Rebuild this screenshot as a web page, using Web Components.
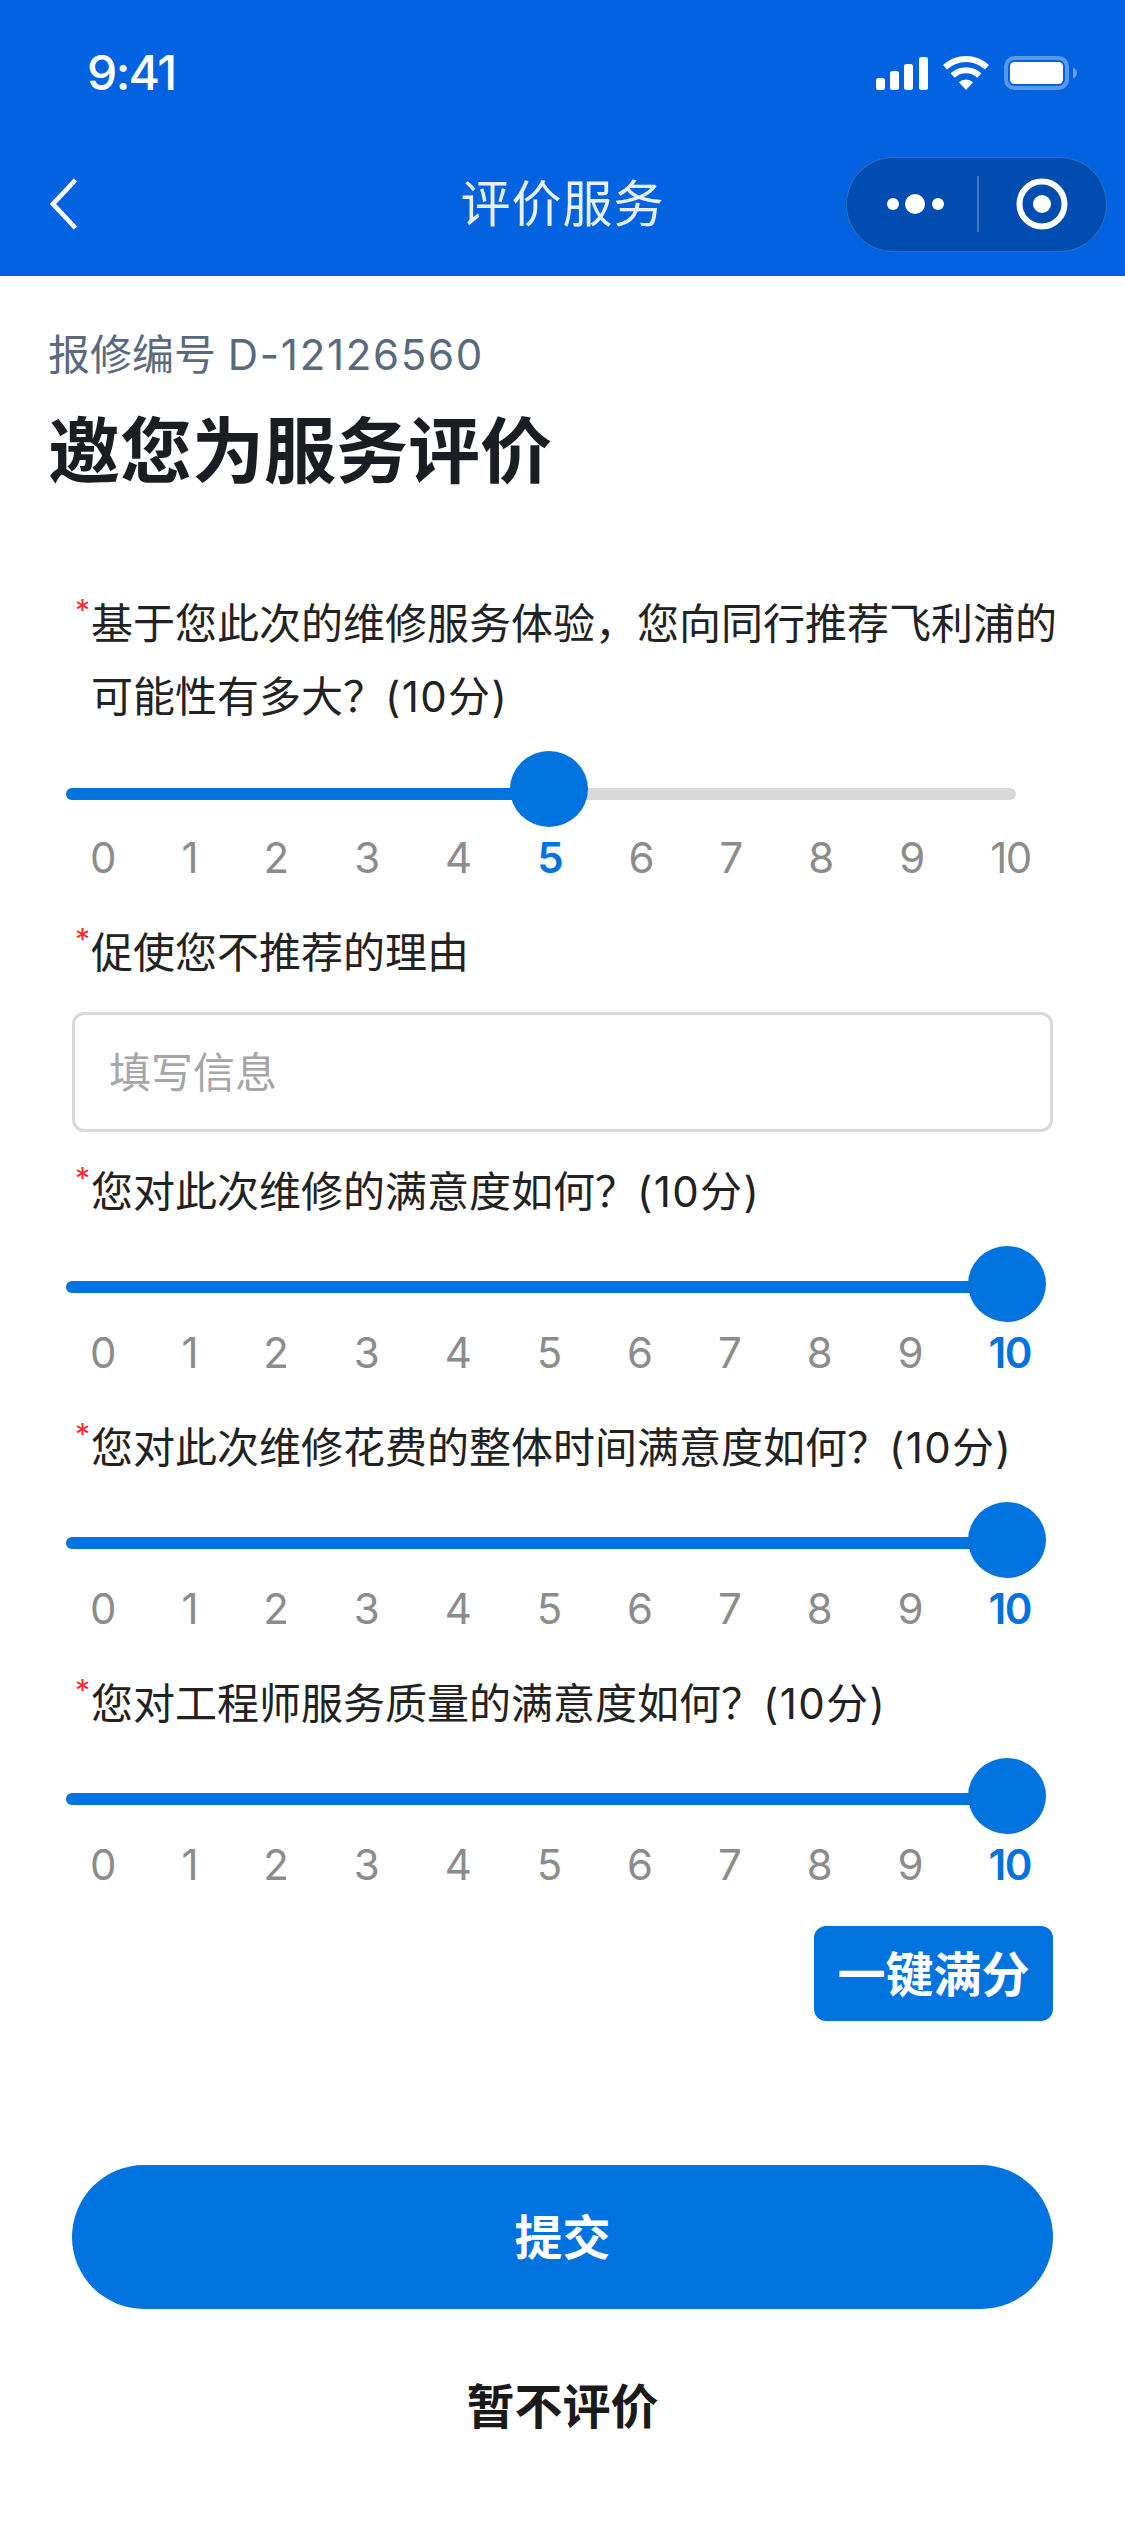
<!DOCTYPE html>
<html lang="zh-CN">
<head>
<meta charset="utf-8">
<title>评价服务</title>
<style>
  html, body { margin: 0; padding: 0; background: #fff; }
  body {
    width: 1125px;
    height: 2525px;
    overflow: hidden;
    font-family: Inter, "Noto Sans CJK SC", sans-serif;
    color: #222;
  }
</style>
</head>
<body>
  <review-page></review-page>

<script>
class StatusBar extends HTMLElement {
  constructor() {
    super();
    this.attachShadow({ mode: 'open' });
  }
  connectedCallback() {
    this.shadowRoot.innerHTML = `
      <style>
        :host { display: flex; align-items: center; justify-content: space-between; height: 132px; padding: 14px 48px 0 87px; box-sizing: border-box; color: #fff; }
        .time { font: 500 48px/58px Inter, sans-serif; letter-spacing: -1.6px; }
        .icons { display: flex; align-items: center; gap: 15px; }
        svg { display: block; }
      </style>
      <span class="time">9:41</span>
      <div class="icons">
        <svg width="52" height="34" viewBox="0 0 52 34" fill="#fff">
          <rect x="0" y="22" width="9" height="12" rx="2.5"/>
          <rect x="14" y="15" width="9" height="19" rx="2.5"/>
          <rect x="28" y="8" width="9" height="26" rx="2.5"/>
          <rect x="43" y="1" width="9" height="33" rx="2.5"/>
        </svg>
        <svg width="46" height="34" viewBox="0 0 46 34" fill="#fff">
          <path d="M0 9A34 34 0 0 1 46 9L41.96 13.4A28 28 0 0 0 4.04 13.4Z"/>
          <path d="M7.63 17.3A22.7 22.7 0 0 1 38.37 17.3L34.3 21.7A16.7 16.7 0 0 0 11.7 21.7Z"/>
          <path d="M15.9 26.3A10.5 10.5 0 0 1 30.1 26.3L23 34Z"/>
        </svg>
        <svg width="73" height="34" viewBox="0 0 73 34" fill="none">
          <rect x="2" y="2" width="61" height="30" rx="8.5" stroke="#fff" stroke-opacity=".35" stroke-width="4"/>
          <rect x="6" y="6" width="53" height="22" rx="4.5" fill="#fff"/>
          <path d="M69 11.5C71.5 12.5 73 14.5 73 17C73 19.5 71.5 21.5 69 22.5Z" fill="#fff" fill-opacity=".4"/>
        </svg>
      </div>
    `;
  }
}
customElements.define('status-bar', StatusBar);

class NavBar extends HTMLElement {
  constructor() {
    super();
    this.attachShadow({ mode: 'open' });
  }
  connectedCallback() {
    this.shadowRoot.innerHTML = `
      <style>
        :host { display: grid; grid-template-columns: 1fr auto 1fr; align-items: center; height: 144px; padding: 0 18px; box-sizing: border-box; }
        .title { font: 400 50px/60px Inter, "Noto Sans CJK SC", sans-serif; color: #e8f0fc; letter-spacing: 1px; }
        .back { display: block; margin-left: 32px; }
        .capsule {
          justify-self: end;
          display: flex;
          align-items: center;
          width: 261px;
          height: 95px;
          box-sizing: border-box;
          border: 1.5px solid rgba(255,255,255,.18);
          border-radius: 48px;
          background: #004cb0;
        }
        .more { width: 130px; box-sizing: border-box; padding-left: 8px; display: flex; justify-content: center; }
        .line { width: 1.5px; height: 56px; background: rgba(255,255,255,.25); }
        .close { flex: 1; display: flex; justify-content: center; }
        svg { display: block; }
      </style>
      <svg class="back" width="28" height="52" viewBox="0 0 28 52" fill="none">
        <path d="M25.5 2L3 26L25.5 50" stroke="#fff" stroke-width="4.6"/>
      </svg>
      <div class="title"><slot></slot></div>
      <div class="capsule">
        <div class="more">
          <svg width="58" height="20" viewBox="0 0 58 20" fill="#fff">
            <circle cx="6" cy="10" r="6"/><circle cx="28" cy="10" r="10"/><circle cx="51" cy="10" r="6"/>
          </svg>
        </div>
        <div class="line"></div>
        <div class="close">
          <svg width="52" height="52" viewBox="0 0 52 52" fill="none">
            <circle cx="26" cy="26" r="22.5" stroke="#fff" stroke-width="6"/>
            <circle cx="26" cy="26" r="9" fill="#fff"/>
          </svg>
        </div>
      </div>
    `;
  }
}
customElements.define('nav-bar', NavBar);

class QuestionLabel extends HTMLElement {
  constructor() {
    super();
    this.attachShadow({ mode: 'open' });
  }
  connectedCallback() {
    this.shadowRoot.innerHTML = `
      <style>
        :host { display: flex; font-size: 42px; line-height: 73px; color: #222; }
        .star { flex: none; width: 19px; color: #ff2a2a; font-size: 30px; line-height: 46px; padding-left: 3px; box-sizing: border-box; }
        .text { flex: 1; min-width: 0; margin-right: -8px; }
      </style>
      <span class="star">*</span>
      <div class="text"><slot></slot></div>
    `;
  }
}
customElements.define('question-label', QuestionLabel);

class RatingSlider extends HTMLElement {
  constructor() {
    super();
    this.attachShadow({ mode: 'open' });
  }
  connectedCallback() {
    const value = Number(this.getAttribute('value') || 0);
    const center = 20 + value * 91.45; // thumb centre from the block's left edge
    let ticks = '';
    for (let i = 0; i <= 10; i++) {
      ticks += `<span class="${i === value ? 'on' : ''}${i === 10 ? ' ten' : ''}">${i}</span>`;
    }
    this.shadowRoot.innerHTML = `
      <style>
        :host { display: block; }
        .rail { position: relative; height: 76px; margin: 18px 0 6px; }
        .track { position: absolute; left: -6px; width: 950px; top: calc(32px + var(--dip, 3px)); height: 12.5px; border-radius: 6px; background: #d8d8d8; overflow: hidden; }
        .fill { height: 100%; background: #0073df; }
        .thumb { position: absolute; top: 0; width: 78px; height: 76px; border-radius: 50%; background: #0073df; }
        .scale { display: flex; justify-content: space-between; padding: 0 22px 0 18px; font: 400 42px/50px Inter, sans-serif; color: #8c8c8c; }
        .on { color: #0073df; font-weight: 600; }
        .ten { letter-spacing: -1.5px; }
      </style>
      <slot></slot>
      <div class="rail">
        <div class="track"><div class="fill" style="width:${center + 6}px"></div></div>
        <div class="thumb" style="left:${center - 39}px"></div>
      </div>
      <div class="scale">${ticks}</div>
    `;
  }
}
customElements.define('rating-slider', RatingSlider);

class TextQuestion extends HTMLElement {
  constructor() {
    super();
    this.attachShadow({ mode: 'open' });
  }
  connectedCallback() {
    this.shadowRoot.innerHTML = `
      <style>
        :host { display: block; }
        .box {
          margin-top: 23.5px;
          height: 119.5px;
          box-sizing: border-box;
          padding: 0 34px 4px;
          display: flex;
          align-items: center;
          border: 3px solid #d9d9d9;
          border-radius: 12px;
          font-size: 42px;
          color: #a6a6a6;
        }
      </style>
      <slot></slot>
      <div class="box">${this.getAttribute('placeholder') || ''}</div>
    `;
  }
}
customElements.define('text-question', TextQuestion);

class ActionButton extends HTMLElement {
  constructor() {
    super();
    this.attachShadow({ mode: 'open' });
  }
  connectedCallback() {
    this.shadowRoot.innerHTML = `
      <style>
        :host { display: flex; align-items: center; justify-content: center; padding-bottom: 5px; font-size: 48px; font-weight: 700; color: #fff; background: #0073df; box-sizing: border-box; }
        :host([kind="small"]) { width: 239px; height: 95px; border-radius: 12px; align-self: flex-end; }
        :host([kind="wide"]) { height: 144px; border-radius: 72px; }
        :host([kind="plain"]) { height: 72px; background: none; color: #1a1a1a; }
      </style>
      <slot></slot>
    `;
  }
}
customElements.define('action-button', ActionButton);

class ReviewPage extends HTMLElement {
  constructor() {
    super();
    this.attachShadow({ mode: 'open' });
  }
  connectedCallback() {
    this.shadowRoot.innerHTML = `
      <style>
        :host { display: block; }
        header { background: #0362e0; height: 276px; }
        .intro { padding: 51px 48px 0; }
        .code { font-size: 42px; line-height: 56px; color: #5a6a7e; }
        .code span { letter-spacing: 1.7px; }
        h1 { margin: 19.5px 0 0; font-size: 72px; line-height: 96px; font-weight: 700; color: #1a1d21; }
        main { display: flex; flex-direction: column; padding: 88px 72px 0 72px; }
        .pts { letter-spacing: 1.4px; }
        .gap-s { margin-top: 33px; }
        .gap-m { margin-top: 23px; }
        .fill-all { margin-top: 36px; }
        .submit { margin-top: 144px; }
        .skip { margin-top: 60.5px; }
      </style>
      <header>
        <status-bar></status-bar>
        <nav-bar>评价服务</nav-bar>
      </header>
      <section class="intro">
        <div class="code">报修编号 <span>D-12126560</span></div>
        <h1>邀您为服务评价</h1>
      </section>
      <main>
        <rating-slider value="5" style="--dip:5px">
          <question-label>
            <div>基于您此次的维修服务体验，您向同行推荐飞利浦的</div>
            <div>可能性有多大？<span class="pts">(10分)</span></div>
          </question-label>
        </rating-slider>
        <text-question class="gap-s" placeholder="填写信息">
          <question-label>促使您不推荐的理由</question-label>
        </text-question>
        <rating-slider class="gap-m" value="10">
          <question-label>您对此次维修的满意度如何？<span class="pts">(10分)</span></question-label>
        </rating-slider>
        <rating-slider class="gap-s" value="10">
          <question-label>您对此次维修花费的整体时间满意度如何？<span class="pts">(10分)</span></question-label>
        </rating-slider>
        <rating-slider class="gap-s" value="10">
          <question-label>您对工程师服务质量的满意度如何？<span class="pts">(10分)</span></question-label>
        </rating-slider>
        <action-button class="fill-all" kind="small">一键满分</action-button>
        <action-button class="submit" kind="wide">提交</action-button>
        <action-button class="skip" kind="plain">暂不评价</action-button>
      </main>
    `;
  }
}
customElements.define('review-page', ReviewPage);
</script>
</body>
</html>
